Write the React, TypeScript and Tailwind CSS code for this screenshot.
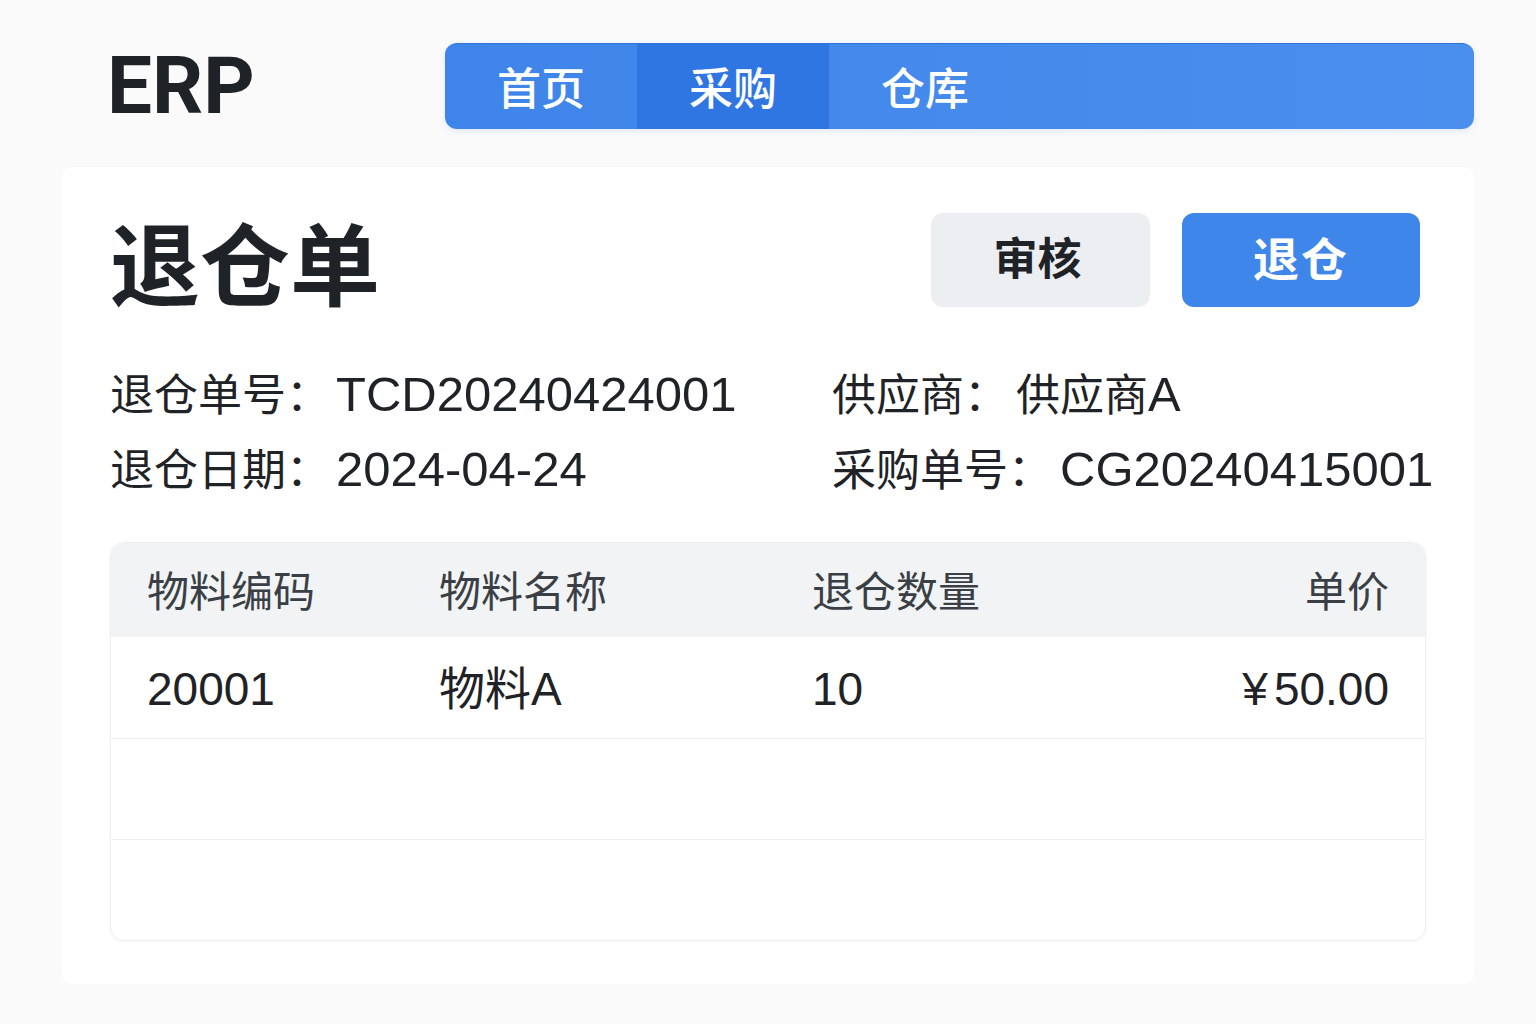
import React from 'react';

const FONT = { fontFamily: '"Liberation Sans", "Noto Sans CJK SC", sans-serif' };

const NAV = ['首页', '采购', '仓库'];
const ACTIVE = '采购';

const INFO = [
  ['退仓单号：', 'TCD20240424001', '供应商：', '供应商A'],
  ['退仓日期：', '2024-04-24', '采购单号：', 'CG20240415001'],
];

const ROWS = [
  { code: '20001', name: '物料A', qty: '10', price: '50.00' },
  null,
  null,
];

// latin runs read a bit larger than the CJK glyphs in the mock
function Mixed({ text }: { text: string }) {
  const parts = text.match(/[\x00-\x7f]+|[^\x00-\x7f]+/g) ?? [];
  return (
    <>
      {parts.map((p, i) => /^[\x00-\x7f]+$/.test(p)
        ? <span key={i} className="text-[49px]">{p}</span>
        : <span key={i}>{p}</span>)}
    </>
  );
}

export default function App() {
  return (
    <div style={FONT} className="min-h-[1024px] w-[1536px] bg-[#fafafa] text-[#1f2226]">
      {/* top bar */}
      <header className="flex items-center pl-[107px] pr-[62px] pt-[43px]">
        <div style={{ fontFamily: 'Roboto, "Liberation Sans", sans-serif' }}
          className="w-[338px] text-[80px] font-bold leading-none text-[#1f2327]">ERP</div>
        <nav className="flex h-[86px] flex-1 overflow-hidden rounded-[12px] border-t border-[#2f72dc] bg-gradient-to-r from-[#3f85e9] to-[#4a8fee] shadow-[0_2px_6px_rgba(59,130,246,0.15)]">
          {NAV.map(n => (
            <div key={n}
              className={`flex w-[192px] items-center justify-center pt-[6px] text-[44px] font-medium leading-none text-white ${n === ACTIVE ? 'bg-[#2f76e3]' : ''}`}>
              {n}
            </div>
          ))}
        </nav>
      </header>

      {/* main card */}
      <main className="mx-[62px] mt-[38px] rounded-[10px] bg-white px-[48px] pb-[43px] pt-[46px]">
        <div className="flex items-start justify-between pr-[6px]">
          <h1 className="mt-[10px] text-[90px] font-bold leading-none text-[#1f2226]">退仓单</h1>
          <div className="flex gap-[32px]">
            <button className="flex h-[94px] w-[219px] items-center justify-center rounded-[12px] bg-[#eceef1] pr-[6px] text-[44px] font-semibold text-[#1f2226]">审核</button>
            <button className="flex h-[94px] w-[238px] items-center justify-center rounded-[12px] bg-[#3f86ea] text-[46px] font-semibold tracking-[2px] text-white">退仓</button>
          </div>
        </div>

        <div className="mt-[56px] grid grid-cols-[722px_1fr] gap-y-[23px] whitespace-nowrap text-[44px] leading-[50px] text-[#1f2226]">
          {INFO.map(([l1, v1, l2, v2]) => (
            <React.Fragment key={l1}>
              <div className="flex items-baseline"><span className="shrink-0">{l1}</span><span className="ml-[6px]"><Mixed text={v1} /></span></div>
              <div className="flex items-baseline"><span className="shrink-0">{l2}</span><span className="ml-[8px]"><Mixed text={v2} /></span></div>
            </React.Fragment>
          ))}
        </div>

        {/* table */}
        <div className="mt-[46px] overflow-hidden rounded-[14px] border border-[#eceef0] shadow-[0_1px_4px_rgba(0,0,0,0.04)]">
          <div className="grid h-[94px] grid-cols-[292px_373px_1fr_1fr] items-center bg-[#f1f3f5] px-[36px] pt-[4px] text-[42px] text-[#3a3f45]">
            <div>物料编码</div>
            <div>物料名称</div>
            <div>退仓数量</div>
            <div className="text-right">单价</div>
          </div>
          {ROWS.map((r, i) => (
            <div key={i}
              className={`grid h-[101px] grid-cols-[292px_373px_1fr_1fr] items-center px-[36px] pt-[4px] text-[46px] text-[#1f2226] ${i > 0 ? 'border-t border-[#eceef0]' : ''}`}>
              <div>{r?.code}</div>
              <div>{r?.name}</div>
              <div>{r?.qty}</div>
              <div className="text-right">{r && <><span className="mr-[6px]">¥</span>{r.price}</>}</div>
            </div>
          ))}
        </div>
      </main>
    </div>
  );
}
